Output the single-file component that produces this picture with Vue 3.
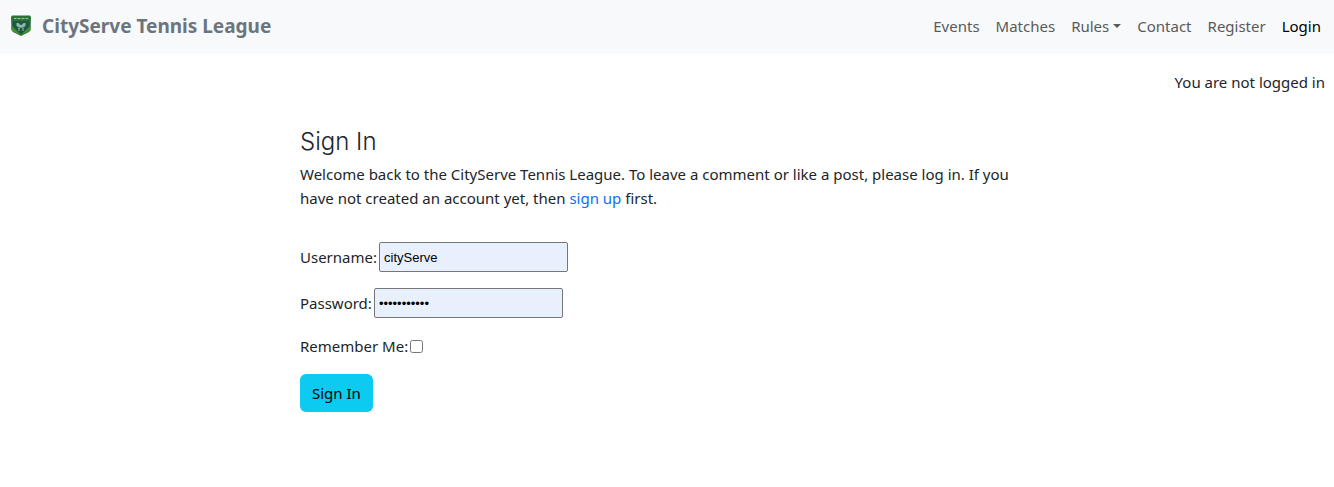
<script setup>
import { ref } from 'vue'

const links = ['Events', 'Matches', 'Rules', 'Contact', 'Register', 'Login']
const username = ref('cityServe')
const password = ref('cityserve01')
const remember = ref(false)
</script>

<template>
  <div class="page">
    <header class="navbar">
      <a class="brand" href="#">
        <svg class="logo" viewBox="0 0 22 22" aria-hidden="true">
          <path d="M2 .5 H20 L21 2 L20.500 15 L19 17 L11 21 L3 17 L1.500 15 L1 2Z" fill="#2b7237" />
          <path d="M2.500 6 H19.500 V11 L14 17 L11 19 L8 17 L2.500 11Z" fill="#1c5946" />
          <path d="M1.500 11 L8 17 L10 19.500 L3 16.500 L1.500 15Z M20.500 11 L14 17 L12 19.500 L19 16.500 L20.500 15Z" fill="#45922f" />
          <path d="M4 3.500 h14" stroke="#a4c5a7" stroke-width="1.200" stroke-dasharray="2 .5 1 .5" />
          <path d="M6.500 8 h2 l2 2 h1 l2-2 h2 v3 l-2.500 1.500 h-4 L6.500 11z" fill="#8fb8a2" />
          <path d="M8 14 l2.500-1.500 M14 14 l-2.500-1.500 M8 15h2 M12 15h2" stroke="#8eb5a0" />
        </svg>
        <span>CityServe Tennis League</span>
      </a>
      <nav class="links">
        <a
          v-for="link in links"
          :key="link"
          href="#"
          :class="{ active: link === 'Login', dropdown: link === 'Rules' }"
        >{{ link }}</a>
      </nav>
    </header>
    <p class="status">You are not logged in</p>
    <main class="content">
      <h1>Sign In</h1>
      <p class="intro">
        Welcome back to the CityServe Tennis League. To leave a comment or like a post, please log in. If you
        have not created an account yet, then <a href="#">sign up</a> first.
      </p>
      <form @submit.prevent>
        <div class="field">
          <label for="username">Username:</label>
          <input id="username" v-model="username" type="text" autocomplete="username" />
        </div>
        <div class="field">
          <label for="password">Password:</label>
          <input id="password" v-model="password" type="password" autocomplete="current-password" />
        </div>
        <div class="field check">
          <label for="remember">Remember Me:</label>
          <input id="remember" v-model="remember" type="checkbox" />
        </div>
        <button type="submit">Sign In</button>
      </form>
    </main>
  </div>
</template>

<style scoped>
.page {
  font-family: "Noto Sans", "Open Sans", sans-serif;
  font-size: 15px;
  line-height: 24px;
  color: #212529;
}
.navbar {
  display: flex;
  align-items: center;
  justify-content: space-between;
  min-height: 54px;
  padding: 0 13px 2px 10px;
  box-sizing: border-box;
  background: #f8f9fa;
}
.brand {
  display: flex;
  align-items: center;
  gap: 10px;
  color: #6c757d;
  font-size: 19px;
  font-weight: 700;
  text-decoration: none;
}
.logo {
  width: 22px;
  height: 22px;
}
.links {
  display: flex;
  gap: 16px;
}
.links a {
  color: #595a5b;
  text-decoration: none;
}
.links .active {
  color: #000;
}
.dropdown::after {
  content: "";
  display: inline-block;
  margin-left: 4px;
  vertical-align: 4px;
  border-top: 4px solid;
  border-right: 4px solid transparent;
  border-left: 4px solid transparent;
}
.status {
  margin: 16px 9px 0;
  text-align: right;
}
.content {
  max-width: 734px;
  margin: 34px auto 0;
}
h1 {
  margin: 0 0 6px;
  font-family: Inter, sans-serif;
  font-size: 24px;
  font-weight: 300;
  line-height: 28px;
}
.intro {
  margin: 0 0 32px;
}
.intro a {
  color: #0d6efd;
  text-decoration: none;
}
.field {
  display: flex;
  align-items: center;
  gap: 2px;
  margin-bottom: 16px;
}
.field input[type="text"],
.field input[type="password"] {
  box-sizing: border-box;
  width: 189px;
  height: 30px;
  padding: 1px 4px;
  border: 1px solid #767676;
  border-radius: 2px;
  background: #e8f0fe;
  color: #000;
  font-family: "Liberation Sans", Arial, sans-serif;
  font-size: 13px;
}
.check input {
  width: 13px;
  height: 13px;
  margin: 0;
}
button {
  padding: 7px 12px;
  border: 0;
  border-radius: 6px;
  background: #0dcaf0;
  color: #000;
  font: inherit;
}
</style>
